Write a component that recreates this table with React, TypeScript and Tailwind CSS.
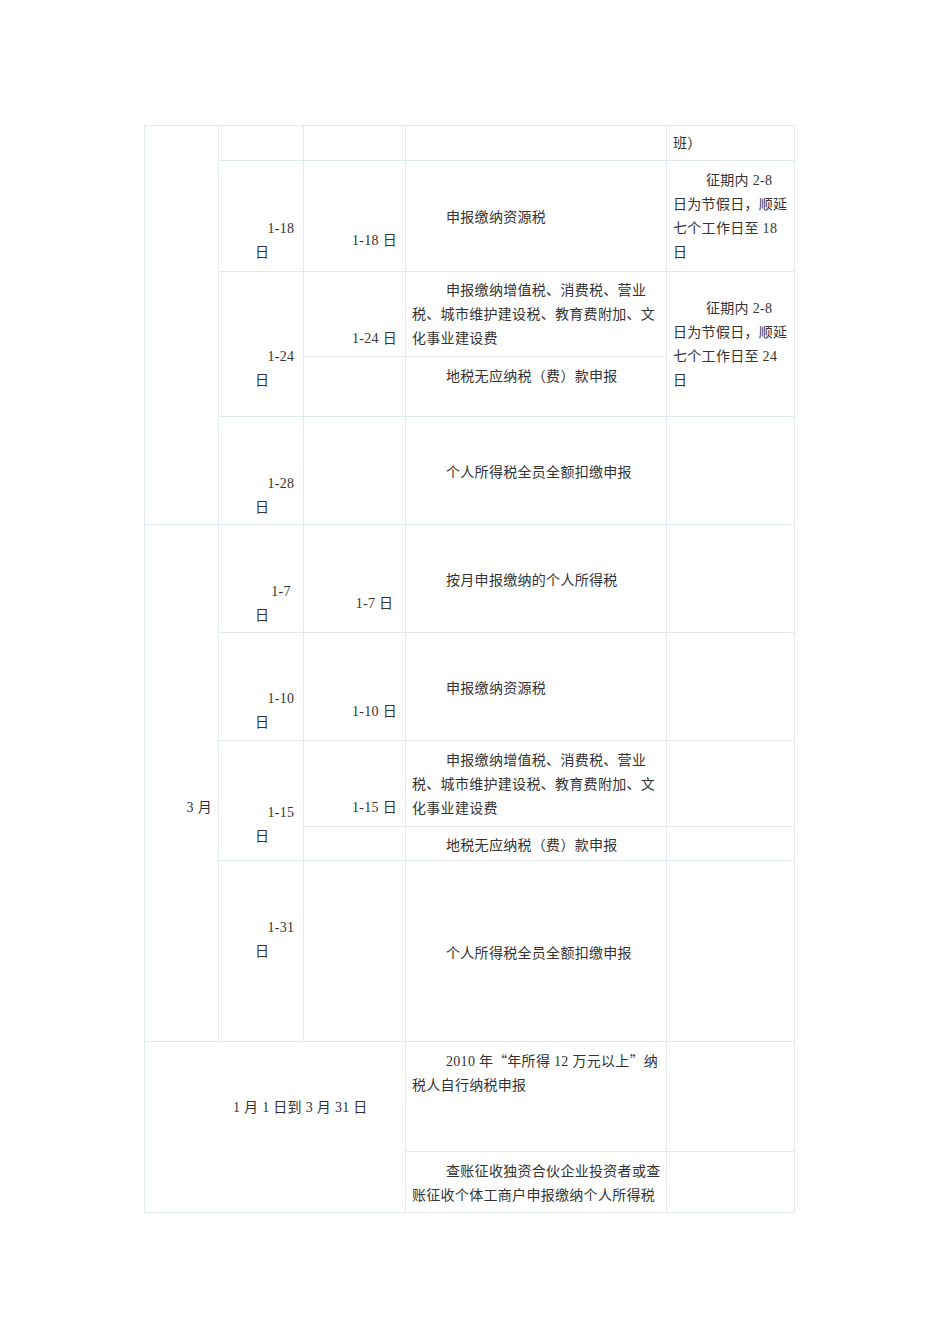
import type { ReactNode } from "react";

const font = { fontFamily: '"Liberation Serif", "Noto Sans CJK SC", serif' };
const cjk = { fontFamily: '"Noto Sans CJK SC", sans-serif' };

// cell wrapper: top-aligned, text placed with explicit padding
function Td({
  children,
  className = "",
  rowSpan,
  colSpan,
}: {
  children?: ReactNode;
  className?: string;
  rowSpan?: number;
  colSpan?: number;
}) {
  return (
    <td rowSpan={rowSpan} colSpan={colSpan} className="border border-[#e3e9f1] p-0 align-top">
      <div className={className}>{children}</div>
    </td>
  );
}

// first line indented, the rest flush left, each line kept on its own
function Para({ lines, indent }: { lines: ReactNode[]; indent: string }) {
  return (
    <>
      {lines.map((l, i) => (
        <div key={i} className={`whitespace-nowrap ${i === 0 ? indent : "pl-[6px]"}`}>
          {l}
        </div>
      ))}
    </>
  );
}

function DayCell({ n, pt }: { n: string; pt: string }) {
  return (
    <div className={pt}>
      <div className="whitespace-nowrap pl-[48px] pr-[8px] text-center">{n}</div>
      <div className="pl-[36px]">日</div>
    </div>
  );
}

export default function App() {
  const vat = ["申报缴纳增值税、消费税、营业", "税、城市维护建设税、教育费附加、文", "化事业建设费"];

  return (
    <div className="min-h-[1344px] bg-white pl-[144px] pt-[125px] text-[14px] leading-[24px] tracking-[0.3px] text-[#333]" style={font}>
      <table className="table-fixed border-collapse w-[650px]">
        <colgroup>
          <col className="w-[74px]" />
          <col className="w-[85px]" />
          <col className="w-[102px]" />
          <col className="w-[261px]" />
          <col className="w-[128px]" />
        </colgroup>
        <tbody>
          <tr className="h-[35px]">
            <Td rowSpan={5} />
            <Td />
            <Td />
            <Td />
            <Td className="pt-[6px] pl-[6px]">班）</Td>
          </tr>
          <tr className="h-[111px]">
            <Td>
              <DayCell n="1-18" pt="pt-[56px]" />
            </Td>
            <Td className="pt-[68px] pl-[40px] text-center whitespace-nowrap">1-18 日</Td>
            <Td className="pt-[45px]">
              <Para lines={["申报缴纳资源税"]} indent="pl-[40px]" />
            </Td>
            <Td className="pt-[8px]">
              <Para lines={["征期内 2-8", "日为节假日，顺延", "七个工作日至 18", "日"]} indent="pl-[39px]" />
            </Td>
          </tr>
          <tr className="h-[85px]">
            <Td rowSpan={2}>
              <DayCell n="1-24" pt="pt-[73px]" />
            </Td>
            <Td className="pt-[55px] pl-[40px] text-center whitespace-nowrap">1-24 日</Td>
            <Td className="pt-[7px]">
              <Para lines={vat} indent="pl-[40px]" />
            </Td>
            <Td rowSpan={2} className="pt-[25px]">
              <Para lines={["征期内 2-8", "日为节假日，顺延", "七个工作日至 24", "日"]} indent="pl-[39px]" />
            </Td>
          </tr>
          <tr className="h-[60px]">
            <Td />
            <Td className="pt-[8px]">
              <Para lines={["地税无应纳税（费）款申报"]} indent="pl-[40px]" />
            </Td>
          </tr>
          <tr className="h-[108px]">
            <Td>
              <DayCell n="1-28" pt="pt-[55px]" />
            </Td>
            <Td />
            <Td className="pt-[44px]">
              <Para lines={["个人所得税全员全额扣缴申报"]} indent="pl-[40px]" />
            </Td>
            <Td />
          </tr>
          <tr className="h-[108px]">
            <Td rowSpan={5} className="pt-[271px] pr-[6px] text-right whitespace-nowrap">
              3 月
            </Td>
            <Td>
              <DayCell n="1-7" pt="pt-[55px]" />
            </Td>
            <Td className="pt-[67px] pl-[40px] text-center whitespace-nowrap">1-7 日</Td>
            <Td className="pt-[44px]">
              <Para lines={["按月申报缴纳的个人所得税"]} indent="pl-[40px]" />
            </Td>
            <Td />
          </tr>
          <tr className="h-[108px]">
            <Td>
              <DayCell n="1-10" pt="pt-[54px]" />
            </Td>
            <Td className="pt-[67px] pl-[40px] text-center whitespace-nowrap">1-10 日</Td>
            <Td className="pt-[44px]">
              <Para lines={["申报缴纳资源税"]} indent="pl-[40px]" />
            </Td>
            <Td />
          </tr>
          <tr className="h-[86px]">
            <Td rowSpan={2}>
              <DayCell n="1-15" pt="pt-[60px]" />
            </Td>
            <Td className="pt-[55px] pl-[40px] text-center whitespace-nowrap">1-15 日</Td>
            <Td className="pt-[8px]">
              <Para lines={vat} indent="pl-[40px]" />
            </Td>
            <Td />
          </tr>
          <tr className="h-[34px]">
            <Td />
            <Td className="pt-[7px]">
              <Para lines={["地税无应纳税（费）款申报"]} indent="pl-[40px]" />
            </Td>
            <Td />
          </tr>
          <tr className="h-[181px]">
            <Td>
              <DayCell n="1-31" pt="pt-[55px]" />
            </Td>
            <Td />
            <Td className="pt-[81px]">
              <Para lines={["个人所得税全员全额扣缴申报"]} indent="pl-[40px]" />
            </Td>
            <Td />
          </tr>
          <tr className="h-[110px]">
            <Td rowSpan={2} colSpan={3} className="pt-[54px] pl-[88px] whitespace-nowrap">
              1 月 1 日到 3 月 31 日
            </Td>
            <Td className="pt-[8px]">
              <Para
                lines={[
                  <>
                    2010 年<span className="leading-none tracking-normal" style={cjk}>“</span>年所得 12 万元以上
                    <span className="leading-none tracking-normal" style={cjk}>”</span>纳
                  </>,
                  "税人自行纳税申报",
                ]}
                indent="pl-[40px]"
              />
            </Td>
            <Td />
          </tr>
          <tr className="h-[61px]">
            <Td className="pt-[8px]">
              <Para lines={["查账征收独资合伙企业投资者或查", "账征收个体工商户申报缴纳个人所得税"]} indent="pl-[40px]" />
            </Td>
            <Td />
          </tr>
        </tbody>
      </table>
    </div>
  );
}
